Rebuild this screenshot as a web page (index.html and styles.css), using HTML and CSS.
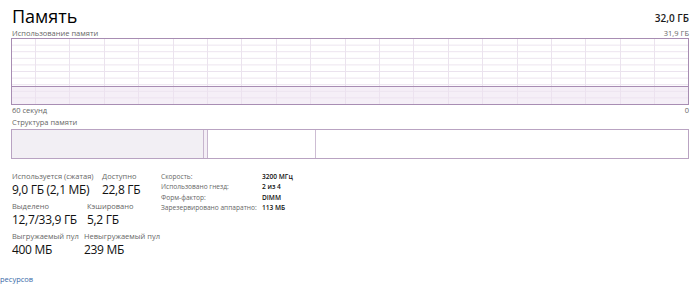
FILE: index.html
```html
<!DOCTYPE html>
<html lang="ru">
<head>
  <meta charset="UTF-8" />
  <title>Память</title>
  <link rel="stylesheet" href="styles.css">
</head>
<body>
  <div class="page">
    <div class="head">
      <h1>Память</h1>
      <div class="total">32,0 ГБ</div>
    </div>

    <div class="caption">
      <span>Использование памяти</span>
      <span>31,9 ГБ</span>
    </div>
    <div class="chart">
      <div class="chart-used"></div>
    </div>
    <div class="caption axis">
      <span>60 секунд</span>
      <span>0</span>
    </div>

    <div class="caption">
      <span>Структура памяти</span>
    </div>
    <div class="composition">
      <div class="seg seg-used"></div>
      <div class="seg seg-modified"></div>
      <div class="seg seg-standby"></div>
      <div class="seg seg-free"></div>
    </div>

    <div class="stats">
      <div class="stat-grid">
        <div class="stat-row">
          <div class="stat s-used">
            <div class="label">Используется (сжатая)</div>
            <div class="value">9,0 ГБ (2,1 МБ)</div>
          </div>
          <div class="stat">
            <div class="label">Доступно</div>
            <div class="value">22,8 ГБ</div>
          </div>
        </div>
        <div class="stat-row">
          <div class="stat s-commit">
            <div class="label">Выделено</div>
            <div class="value">12,7/33,9 ГБ</div>
          </div>
          <div class="stat">
            <div class="label">Кэшировано</div>
            <div class="value">5,2 ГБ</div>
          </div>
        </div>
        <div class="stat-row">
          <div class="stat s-paged">
            <div class="label">Выгружаемый пул</div>
            <div class="value">400 МБ</div>
          </div>
          <div class="stat">
            <div class="label">Невыгружаемый пул</div>
            <div class="value">239 МБ</div>
          </div>
        </div>
      </div>

      <table class="props">
        <tr><td>Скорость:</td><td class="pv">3200 МГц</td></tr>
        <tr><td>Использовано гнезд:</td><td class="pv">2 из 4</td></tr>
        <tr><td>Форм-фактор:</td><td class="pv">DIMM</td></tr>
        <tr><td>Зарезервировано аппаратно:</td><td class="pv">113 МБ</td></tr>
      </table>
    </div>
  </div>

  <a class="link" href="#">ресурсов</a>
</body>
</html>
```

FILE: styles.css
```css
body {
  margin: 0; background: #fff; color: #1a1a1a;
  font-family: "Open Sans", "Noto Sans", sans-serif;
  width: 700px; height: 284px; overflow: hidden; position: relative;
}
.page { padding: 0 11px 0 11px; }

.head { display: flex; justify-content: space-between; align-items: flex-end; height: 28px; }
h1 { margin: 0; font-size: 18px; font-weight: 400; line-height: 24px; padding-left: 1px; color: #000; }
.total { font-size: 10px; font-weight: 600; line-height: 14px; padding-bottom: 3px; }

.caption {
  display: flex; justify-content: space-between;
  font-size: 7.5px; line-height: 10px; color: #666; padding: 0 0 0 1px; height: 10px;
}
.axis { height: 12px; line-height: 11px; }

.chart {
  height: 65px; border: 1px solid #a88db3; position: relative;
  background-color: #fff;
  background-image:
    repeating-linear-gradient(to right, transparent 0 23px, #ebe3ee 23px 24px, transparent 24px 34.4px),
    repeating-linear-gradient(to bottom, transparent 0 6px, #ebe3ee 6px 7px, transparent 7px 6.6px);
  background-size: 100% 100%, 100% 6.6px;
}
.chart-used {
  position: absolute; left: 0; right: 0; bottom: 0; height: 17px;
  border-top: 1px solid #a88db3; background: rgba(236, 226, 240, 0.55);
}

.composition {
  display: flex; height: 28px; border: 1px solid #b9a3c2; margin-top: 2px;
}
.seg { height: 100%; }
.seg-used { width: 191px; background: #f2eff4; }
.seg-modified { width: 3px; border-left: 1px solid #c7b5ce; border-right: 1px solid #c7b5ce; background: #f4eef6; }
.seg-standby { width: 107px; border-right: 1px solid #cdbdd3; }
.seg-free { flex: 1; }

.stats { display: flex; align-items: flex-start; margin-top: 12px; }
.stat-grid { width: 149px; padding-left: 1px; }
.stat-row { display: flex; height: 30px; }
.s-used { width: 90px; }
.s-commit { width: 75px; }
.s-paged { width: 72px; }
.label { font-size: 7.5px; line-height: 10px; color: #666; white-space: nowrap; }
.value { font-size: 12px; line-height: 17px; color: #111; white-space: nowrap; letter-spacing: -0.3px; }

.props { border-collapse: collapse; font-size: 6.6px; color: #666; margin-top: 1px; }
.props td { padding: 0; line-height: 10.4px; white-space: nowrap; }
.props td:first-child { width: 101px; }
.pv { color: #111; font-weight: 600; }

.link { position: absolute; left: 0; top: 274px; font-size: 7.5px; color: #3a6aa8; text-decoration: none; }
```
